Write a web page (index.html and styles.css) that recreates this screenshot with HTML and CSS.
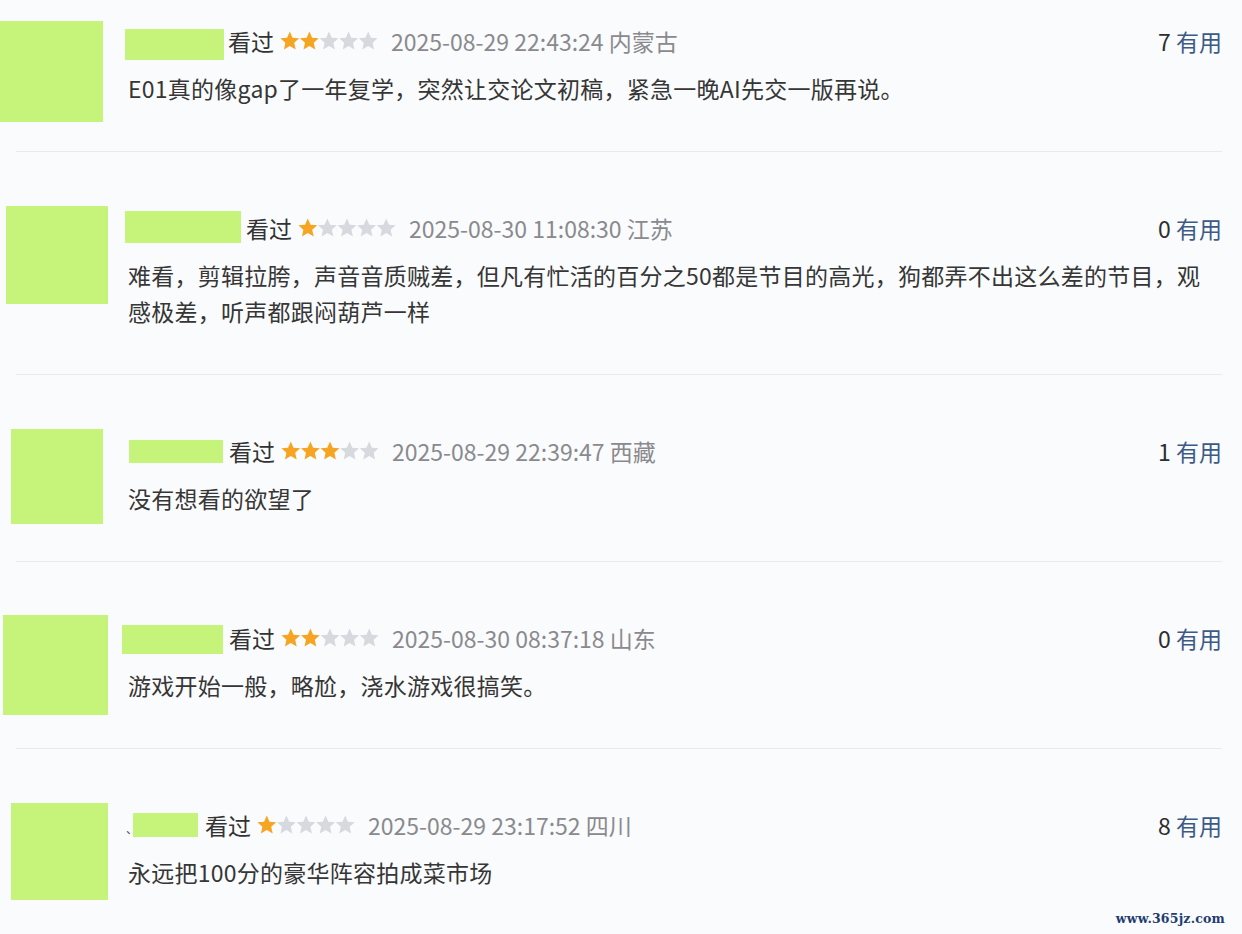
FILE: index.html
```html
<!DOCTYPE html>
<html lang="zh-CN">
<head>
<meta charset="utf-8">
<title>短评</title>
<link rel="stylesheet" href="styles.css">
</head>
<body>
<svg width="0" height="0" class="defs">
  <defs>
    <path id="star" d="M10 0.4l2.8 6.2 6.8.7-5.1 4.6 1.5 6.7L10 15.2 4 18.6l1.5-6.7L0.4 7.3l6.8-.7z"/>
  </defs>
</svg>
<main class="list">
  <section class="review review--first">
    <div class="avatar-col"><div class="avatar avatar--r1"></div></div>
    <div class="body">
      <div class="meta">
        <span class="name name--r1"></span>
        <span class="watched">看过</span>
        <svg class="stars" viewBox="0 0 100 20"><use href="#star" x="0" class="on"/><use href="#star" x="20" class="on"/><use href="#star" x="40" class="off"/><use href="#star" x="60" class="off"/><use href="#star" x="80" class="off"/></svg>
        <span class="date">2025-08-29 22:43:24 内蒙古</span>
        <span class="useful"><span class="count">7</span> 有用</span>
      </div>
      <p class="content">E01真的像gap了一年复学，突然让交论文初稿，紧急一晚AI先交一版再说。</p>
    </div>
  </section>
  <hr class="divider">
  <section class="review">
    <div class="avatar-col"><div class="avatar avatar--r2"></div></div>
    <div class="body">
      <div class="meta">
        <span class="name name--r2"></span>
        <span class="watched">看过</span>
        <svg class="stars" viewBox="0 0 100 20"><use href="#star" x="0" class="on"/><use href="#star" x="20" class="off"/><use href="#star" x="40" class="off"/><use href="#star" x="60" class="off"/><use href="#star" x="80" class="off"/></svg>
        <span class="date">2025-08-30 11:08:30 江苏</span>
        <span class="useful"><span class="count">0</span> 有用</span>
      </div>
      <p class="content">难看，剪辑拉胯，声音音质贼差，但凡有忙活的百分之50都是节目的高光，狗都弄不出这么差的节目，观感极差，听声都跟闷葫芦一样</p>
    </div>
  </section>
  <hr class="divider">
  <section class="review">
    <div class="avatar-col"><div class="avatar avatar--r3"></div></div>
    <div class="body">
      <div class="meta">
        <span class="name name--r3"></span>
        <span class="watched">看过</span>
        <svg class="stars" viewBox="0 0 100 20"><use href="#star" x="0" class="on"/><use href="#star" x="20" class="on"/><use href="#star" x="40" class="on"/><use href="#star" x="60" class="off"/><use href="#star" x="80" class="off"/></svg>
        <span class="date">2025-08-29 22:39:47 西藏</span>
        <span class="useful"><span class="count">1</span> 有用</span>
      </div>
      <p class="content">没有想看的欲望了</p>
    </div>
  </section>
  <hr class="divider">
  <section class="review">
    <div class="avatar-col"><div class="avatar avatar--r4"></div></div>
    <div class="body">
      <div class="meta">
        <span class="name name--r4"></span>
        <span class="watched">看过</span>
        <svg class="stars" viewBox="0 0 100 20"><use href="#star" x="0" class="on"/><use href="#star" x="20" class="on"/><use href="#star" x="40" class="off"/><use href="#star" x="60" class="off"/><use href="#star" x="80" class="off"/></svg>
        <span class="date">2025-08-30 08:37:18 山东</span>
        <span class="useful"><span class="count">0</span> 有用</span>
      </div>
      <p class="content">游戏开始一般，略尬，浇水游戏很搞笑。</p>
    </div>
  </section>
  <hr class="divider">
  <section class="review">
    <div class="avatar-col"><div class="avatar avatar--r5"></div></div>
    <div class="body">
      <div class="meta">
        <span class="mark">、</span>
        <span class="name name--r5"></span>
        <span class="watched">看过</span>
        <svg class="stars" viewBox="0 0 100 20"><use href="#star" x="0" class="on"/><use href="#star" x="20" class="off"/><use href="#star" x="40" class="off"/><use href="#star" x="60" class="off"/><use href="#star" x="80" class="off"/></svg>
        <span class="date">2025-08-29 23:17:52 四川</span>
        <span class="useful"><span class="count">8</span> 有用</span>
      </div>
      <p class="content">永远把100分的豪华阵容拍成菜市场</p>
    </div>
  </section>
</main>
<div class="watermark">www.365jz.com</div>
</body>
</html>
```
FILE: styles.css
```css
* { box-sizing: border-box; }

html, body {
  margin: 0;
  padding: 0;
  background: #fafbfd;
}

body {
  width: 1242px;
  height: 934px;
  overflow: hidden;
  position: relative;
  font-family: "Noto Sans CJK SC", "Noto Sans", sans-serif;
  font-size: 23px;
  color: #363636;
}

.defs { position: absolute; }

.list {
  display: flex;
  flex-direction: column;
}

.review {
  display: flex;
  align-items: flex-start;
  padding: 58px 20px 45px 0;
}

.review--first { padding-top: 23px; }

.avatar-col {
  flex: none;
  width: 128px;
}

.avatar {
  background: #c6f47b;
  margin-bottom: -40px;
}

.avatar--r1 { width: 103px; height: 101px; margin-left: 0; margin-top: -2px; }
.avatar--r2 { width: 102px; height: 98px; margin-left: 6px; margin-top: -4px; }
.avatar--r3 { width: 92px; height: 95px; margin-left: 11px; margin-top: -4px; }
.avatar--r4 { width: 105px; height: 100px; margin-left: 3px; margin-top: -5px; }
.avatar--r5 { width: 97px; height: 97px; margin-left: 11px; margin-top: -4px; }

.body {
  flex: 1;
  min-width: 0;
}

.meta {
  display: flex;
  align-items: center;
  height: 36px;
  line-height: 36px;
  white-space: nowrap;
}

.name {
  display: block;
  background: #c6f47b;
}

.name--r1 { width: 99px; height: 31px; margin-left: -3px; margin-top: 7px; margin-right: 4px; }
.name--r2 { width: 116px; height: 32px; margin-left: -3px; margin-top: -2px; margin-right: 5px; }
.name--r3 { width: 94px; height: 23px; margin-left: 1px; margin-right: 6px; }
.name--r4 { width: 101px; height: 29px; margin-left: -6px; margin-top: 3px; margin-right: 6px; }
.name--r5 { width: 65px; height: 24px; margin-right: 7px; }

.mark {
  color: #555;
  font-size: 12px;
  line-height: 12px;
  margin-top: 8px;
  margin-left: -2px;
  margin-right: -5px;
}

.watched { color: #333; }

.stars {
  width: 98px;
  height: 20px;
  margin-left: 6px;
}

.stars .on { fill: #f6a523; }
.stars .off { fill: #d6d9dd; }

.date {
  margin-left: 13px;
  color: #8a8a8e;
}

.useful {
  margin-left: auto;
  color: #3d5a86;
}

.useful .count { color: #2e2e2e; }

.content {
  margin: 11px 0 0;
  max-width: 1085px;
  line-height: 36px;
  letter-spacing: 0.25px;
  color: #363636;
}

.divider {
  border: 0;
  height: 1px;
  margin: 0 20px 0 16px;
  background: #e8eaee;
}

.watermark {
  position: absolute;
  right: 17px;
  bottom: 8px;
  font-family: "DejaVu Serif", serif;
  font-size: 12.5px;
  font-weight: bold;
  color: #1f3d70;
  letter-spacing: 0.2px;
}
```
